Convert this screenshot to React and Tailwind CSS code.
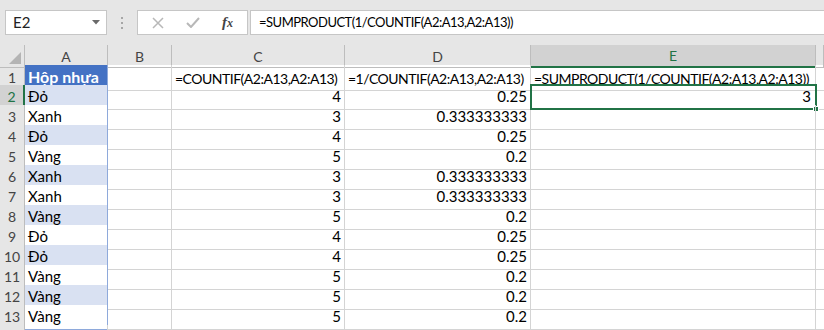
import React from "react";

const F = { fontFamily: "Lato, 'Liberation Sans', sans-serif" };

const rows = [
  ["Hộp nhựa", "", "=COUNTIF(A2:A13,A2:A13)", "=1/COUNTIF(A2:A13,A2:A13)", "=SUMPRODUCT(1/COUNTIF(A2:A13,A2:A13))"],
  ["Đỏ", "", "4", "0.25", "3"],
  ["Xanh", "", "3", "0.333333333", ""],
  ["Đỏ", "", "4", "0.25", ""],
  ["Vàng", "", "5", "0.2", ""],
  ["Xanh", "", "3", "0.333333333", ""],
  ["Xanh", "", "3", "0.333333333", ""],
  ["Vàng", "", "5", "0.2", ""],
  ["Đỏ", "", "4", "0.25", ""],
  ["Đỏ", "", "4", "0.25", ""],
  ["Vàng", "", "5", "0.2", ""],
  ["Vàng", "", "5", "0.2", ""],
  ["Vàng", "", "5", "0.2", ""],
  ["", "", "", "", ""],
];

const cols = ["A", "B", "C", "D", "E", ""];
const grid = "grid grid-cols-[25px_83px_64px_173px_186px_285px_1fr]";

function FormulaBar() {
  return (
    <div className="h-[45px] bg-[#e6e6e6] flex items-start pt-[10px] pl-[5px]">
      <div className="w-[102px] h-[25px] bg-white border border-[#c6c6c6] flex items-center justify-between pl-[7px] pr-[6px]">
        <span className="text-[15px] text-[#222]" style={F}>E2</span>
        <svg width="8" height="5" viewBox="0 0 8 5"><path d="M0 0h8L4 4.5z" fill="#6a6a6a" /></svg>
      </div>
      <div className="w-[30px] h-[25px] flex flex-col items-center justify-center gap-[3px]">
        <span className="w-[2px] h-[2px] bg-[#a6a6a6]" />
        <span className="w-[2px] h-[2px] bg-[#a6a6a6]" />
        <span className="w-[2px] h-[2px] bg-[#a6a6a6]" />
      </div>
      <div className="w-[111px] h-[25px] bg-white border border-[#c6c6c6] flex items-center">
        <svg className="ml-[14px]" width="12" height="12" viewBox="0 0 12 12"><path d="M1 1l10 10M11 1L1 11" stroke="#b8b8b8" strokeWidth="1.5" /></svg>
        <svg className="ml-[22px]" width="14" height="11" viewBox="0 0 14 11"><path d="M1 6l4 4L13 1" stroke="#b8b8b8" strokeWidth="2" fill="none" /></svg>
        <span className="ml-[22px] text-[15px] italic font-bold text-[#444] leading-none" style={{ fontFamily: "'Liberation Serif', serif" }}>f<span className="text-[12px]">x</span></span>
      </div>
      <div className="flex-1 ml-[2px] h-[25px] bg-white border border-[#c6c6c6] border-r-0 flex items-center pl-[8px]">
        <span className="text-[13px] tracking-[-0.5px] text-black" style={F}>=SUMPRODUCT(1/COUNTIF(A2:A13,A2:A13))</span>
      </div>
    </div>
  );
}

export default function App() {
  return (
    <div className="w-[824px] h-[330px] overflow-hidden bg-white" style={F}>
      <FormulaBar />
      <div className={grid + " h-[20px] bg-[#e6e6e6]"}>
        <div className="relative border-r border-b border-[#bdbdbd]">
          <svg className="absolute right-[3px] bottom-[3px]" width="12" height="12" viewBox="0 0 12 12"><path d="M12 0v12H0z" fill="#b4b4b4" /></svg>
        </div>
        {cols.map((c, idx) => (
          <div
            key={idx}
            className={
              c === "E"
                ? "flex items-center justify-center border-r border-[#bdbdbd] border-b-2 border-b-[#217346] bg-[#d2d2d2] text-[14px] text-[#217346]"
                : "flex items-center justify-center border-r border-b border-[#bdbdbd] text-[14px] text-[#444]"
            }
          >
            {c}
          </div>
        ))}
      </div>
      {rows.map((r, i) => {
        const n = i + 1;
        const sel = n === 2;
        const txt = n === 1 ? "pl-[3px] text-[14px] tracking-[-0.5px]" : "justify-end pr-[3px] text-[15px]";
        return (
          <div key={n} className={grid + " h-[20px]"}>
            <div
              className={
                sel
                  ? "flex items-center justify-center bg-[#d2d2d2] border-b border-[#bdbdbd] border-r-2 border-r-[#217346] text-[14px] text-[#217346]"
                  : "flex items-center justify-center bg-[#e6e6e6] border-r border-b border-[#bdbdbd] text-[14px] text-[#444]"
              }
            >
              {n <= 13 ? n : ""}
            </div>
            <div
              className={
                n === 1
                  ? "flex items-end pl-[3px] pb-[1px] bg-[#4472c4] border-r border-b border-[#8ea9db] text-[16px] font-bold text-white whitespace-nowrap"
                  : n <= 13
                  ? (n % 2 === 0 ? "bg-[#d9e1f2] " : "bg-white ") +
                    "flex items-end pl-[3px] pb-[1px] border-r border-b border-[#8ea9db] text-[15px] text-black whitespace-nowrap"
                  : "border-r border-b border-[#d4d4d4]"
              }
            >
              {r[0]}
            </div>
            <div className="border-r border-b border-[#d4d4d4]" />
            <div className={"flex items-end pb-[1px] border-r border-b border-[#d4d4d4] text-black whitespace-nowrap " + txt}>
              {r[2]}
            </div>
            <div className={"flex items-end pb-[1px] border-r border-b border-[#d4d4d4] text-black whitespace-nowrap " + txt}>
              {r[3]}
            </div>
            <div className={"relative flex items-end pb-[1px] border-r border-b border-[#d4d4d4] text-black whitespace-nowrap " + (n === 1 ? txt : "justify-end pr-[4px] text-[15px]")}>
              {r[4]}
              {sel && (
                <>
                  <div className="absolute left-[-1px] top-[-1px] right-[-2px] bottom-[-1px] border-2 border-[#217346] pointer-events-none" />
                  <div className="absolute right-[-4px] bottom-[-3px] w-[6px] h-[6px] bg-[#217346] border border-white" />
                </>
              )}
            </div>
            <div className="border-b border-[#d4d4d4]" />
          </div>
        );
      })}
    </div>
  );
}
